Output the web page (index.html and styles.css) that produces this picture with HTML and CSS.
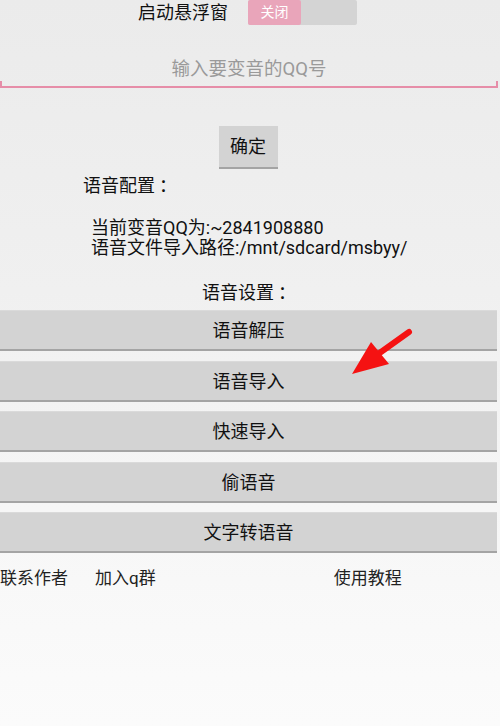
FILE: index.html
```html
<!DOCTYPE html>
<html lang="zh-CN">
<head>
<meta charset="utf-8">
<title>变音</title>
<link rel="stylesheet" href="styles.css">
</head>
<body>
<div class="page">
  <div class="top-row">
    <span class="top-label">启动悬浮窗</span>
    <div class="switch">
      <span class="switch-on">关闭</span>
      <span class="switch-off"></span>
    </div>
  </div>

  <div class="qq-input">输入要变音的QQ号</div>

  <div class="confirm-wrap">
    <div class="btn confirm">确定</div>
  </div>

  <div class="section-label">语音配置<span class="colon">：</span></div>
  <div class="info">
    <div class="info-line">当前变音QQ为:~2841908880</div>
    <div class="info-line">语音文件导入路径:/mnt/sdcard/msbyy/</div>
  </div>

  <div class="settings-label">语音设置<span class="colon">：</span></div>

  <div class="actions">
    <div class="btn wide">语音解压</div>
    <div class="btn wide">语音导入</div>
    <div class="btn wide">快速导入</div>
    <div class="btn wide">偷语音</div>
    <div class="btn wide">文字转语音</div>
  </div>

  <div class="footer">
    <span class="link link-author">联系作者</span>
    <span class="link link-group">加入q群</span>
    <span class="link link-guide">使用教程</span>
  </div>

  <svg class="arrow" width="500" height="726" viewBox="0 0 500 726" aria-hidden="true">
    <line x1="409" y1="332" x2="374" y2="357" stroke="#f51212" stroke-width="6" stroke-linecap="round"/>
    <polygon points="352,374 371,342 389,364" fill="#f51212"/>
  </svg>
</div>
</body>
</html>
```

FILE: styles.css
```css
* {
  box-sizing: border-box;
}

html, body {
  margin: 0;
  padding: 0;
}

body {
  width: 500px;
  height: 726px;
  background: linear-gradient(to bottom, #ebebeb 0%, #f0f0f0 40%, #f8f8f8 80%, #fbfbfb 100%);
  font-family: Roboto, "Noto Sans CJK SC", sans-serif;
  color: #111;
  overflow: hidden;
}

.page {
  position: relative;
  width: 500px;
  height: 726px;
}

.top-row {
  display: flex;
  justify-content: center;
  align-items: center;
  gap: 20px;
  height: 26px;
  padding-right: 5px;
}

.top-label {
  font-size: 18px;
  line-height: 26px;
  color: #111;
}

.switch {
  display: flex;
  width: 109px;
  height: 25px;
  background: #d4d4d4;
  border-radius: 2px;
  margin-top: -1px;
}

.switch-on {
  width: 53px;
  background: #e9a5ba;
  color: #fff;
  font-size: 14px;
  line-height: 25px;
  text-align: center;
  border-radius: 2px;
}

.qq-input {
  position: relative;
  margin: 26px 2px 0 0;
  height: 36px;
  line-height: 34px;
  text-align: center;
  font-size: 18.5px;
  color: #9a9a9a;
  border-bottom: 2px solid #e68da8;
}

.qq-input::before,
.qq-input::after {
  content: "";
  position: absolute;
  bottom: 0;
  width: 2px;
  height: 5px;
  background: #e68da8;
}

.qq-input::before {
  left: 0;
}

.qq-input::after {
  right: 0;
}

.confirm-wrap {
  display: flex;
  justify-content: center;
  margin-top: 38px;
  padding-right: 4px;
}

.btn {
  background: #d3d3d3;
  border-bottom: 2px solid #a4a4a4;
  color: #111;
  font-size: 18px;
  text-align: center;
}

.confirm {
  width: 59px;
  height: 43px;
  line-height: 42px;
}

.colon {
  padding-left: 4px;
}

.section-label {
  margin-top: 7px;
  padding-left: 83px;
  font-size: 18px;
  line-height: 20px;
}

.info {
  margin-top: 22px;
  padding-left: 91px;
  font-size: 18px;
  line-height: 20px;
}

.settings-label {
  margin-top: 25px;
  text-align: center;
  font-size: 18px;
  line-height: 20px;
  padding-right: 2px;
}

.actions {
  display: flex;
  flex-direction: column;
  gap: 9.5px;
  margin-top: 7px;
  padding-right: 3px;
}

.wide {
  height: 41px;
  line-height: 40px;
  border-top: 1px solid #dadada;
}

.footer {
  display: flex;
  margin-top: 15px;
  font-size: 17px;
  line-height: 20px;
  color: #222;
}

.link-group {
  margin-left: 27px;
}

.link-guide {
  margin-left: 178px;
}

.arrow {
  position: absolute;
  left: 0;
  top: 0;
  pointer-events: none;
}
```
